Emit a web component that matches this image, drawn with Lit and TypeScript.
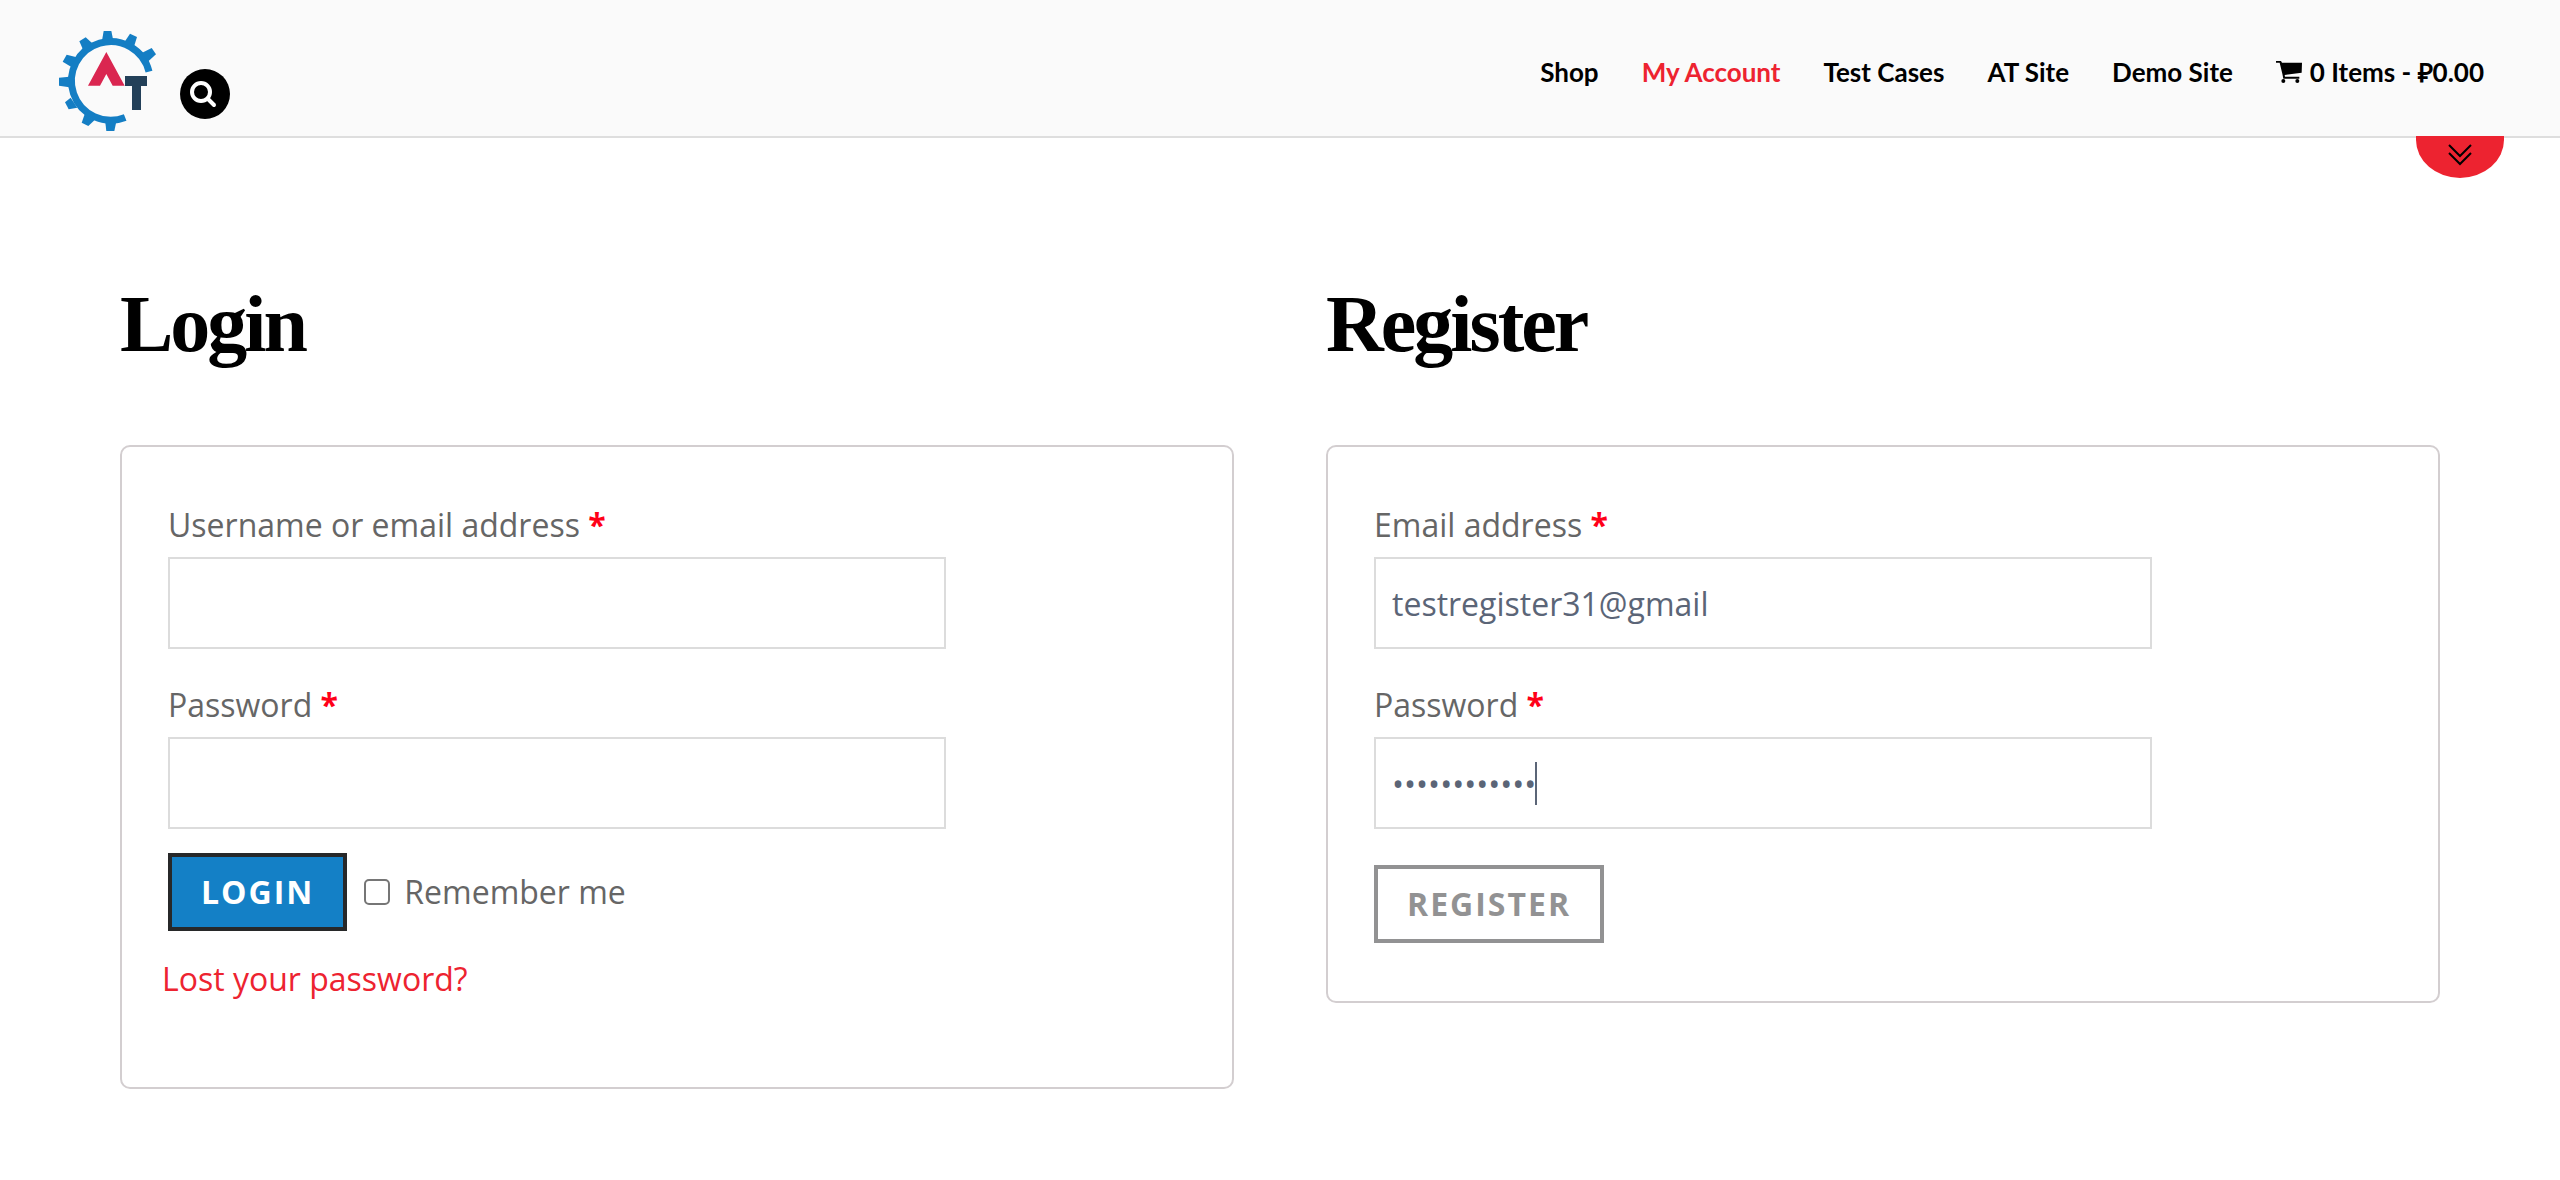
import { LitElement, html, svg, css } from "lit";
import { customElement, property } from "lit/decorators.js";

const cartIcon = svg`
  <path d="M0 0H15L18 5H78L77 35L26 42L27 47H70V53H22L19 38L11 5H0Z" />
  <circle cx="22" cy="60" r="6" /><circle cx="64" cy="60" r="6" />
`;

@customElement("site-header")
export class SiteHeader extends LitElement {
  static styles = css`
    :host {
      display: block;
      position: relative;
    }
    .bar {
      display: flex;
      align-items: flex-start;
      justify-content: space-between;
      padding: 31px 76px 5px 59px;
      background: #fafafa;
      border-bottom: 2px solid #dedede;
    }
    .brand {
      display: flex;
      align-items: flex-start;
      gap: 24px;
    }
    .logo,
    .logo svg {
      display: block;
      width: 97px;
      height: 100px;
    }
    .search {
      width: 50px;
      height: 50px;
      margin-top: 38px;
      padding: 0;
      border: 0;
      border-radius: 50%;
      background: #000;
    }
    .search svg {
      display: block;
    }
    .menu {
      display: flex;
      gap: 43px;
      margin: 23px 0 0;
      padding: 0;
      list-style: none;
      font: 700 26px/36px Lato, "Open Sans", sans-serif;
    }
    .link {
      display: flex;
      align-items: center;
      gap: 8px;
      color: #000;
      text-decoration: none;
      white-space: nowrap;
    }
    .active {
      color: #ed2330;
    }
    .tab {
      position: absolute;
      right: 56px;
      bottom: -40px;
      width: 88px;
      height: 42px;
      padding: 0;
      border: 0;
      border-radius: 0 0 44px 44px / 0 0 38px 38px;
      background: #ed2330;
    }
    .tab svg {
      display: block;
    }
  `;

  render() {
    return html`
      <header class="bar">
        <div class="brand">
          <a class="logo" href="#" aria-label="Automation practice site">
            <svg viewBox="57 63 291 300" aria-hidden="true">
              <path d="M327 185A118 118 0 1 0 255.500 322.500" fill="none" stroke="#147ec4" stroke-width="21" />
              <g fill="#147ec4">
                <path d="M191 63H214L220 92H186Z" />
                <path d="M270 71L291 81L281 113L251 100Z" />
                <path d="M335 114L348 133L325 154L305 129Z" />
                <path d="M118 94L137 82L160 103L131 123Z" />
                <path d="M80 134L68 155L93 170L110 142Z" />
                <path d="M57 203V227L88 232V200Z" />
                <path d="M75 277L86 298L112 293L92 263Z" />
                <path d="M125 338L145 348L164 330L134 313Z" />
                <path d="M199 363H223L230 330H195Z" />
              </g>
              <path d="M199 126L254 227H218L199 192L180 227H144Z" fill="#da2650" />
              <path d="M255 198H321V228H303V300H276V228H255Z" fill="#234059" />
            </svg>
          </a>
          <button class="search" type="button" aria-label="Search">
            <svg width="50" height="50" viewBox="0 0 50 50" fill="none" stroke="#fff" stroke-width="4" stroke-linecap="round">
              <circle cx="21" cy="23" r="9" />
              <path d="M28 30L34 36" />
            </svg>
          </button>
        </div>
        <nav>
          <ul class="menu">
            <li><a class="link" href="#">Shop</a></li>
            <li><a class="link active" href="#">My Account</a></li>
            <li><a class="link" href="#">Test Cases</a></li>
            <li><a class="link" href="#">AT Site</a></li>
            <li><a class="link" href="#">Demo Site</a></li>
            <li>
              <a class="link" href="#">
                <svg width="26" height="22" viewBox="0 0 78 66" aria-hidden="true">${cartIcon}</svg>
                0 Items - ₽0.00
              </a>
            </li>
          </ul>
        </nav>
      </header>
      <button class="tab" type="button" aria-label="Expand">
        <svg width="88" height="42" viewBox="0 0 88 42" fill="none" stroke="#000" stroke-width="2">
          <path d="M33 9L44 20L55 9M33 17L44 28L55 17" />
        </svg>
      </button>
    `;
  }
}

@customElement("form-field")
export class FormField extends LitElement {
  @property() label = "";
  @property() type = "text";
  @property() value = "";
  @property({ type: Boolean }) caret = false;

  static styles = css`
    :host {
      display: block;
    }
    .label {
      display: block;
      margin-bottom: 10px;
    }
    .star {
      color: #ff0018;
      font-weight: 700;
    }
    .box {
      position: relative;
      max-width: 778px;
    }
    .input {
      display: block;
      box-sizing: border-box;
      width: 100%;
      height: 92px;
      padding: 0 16px;
      border: 2px solid #dcdcdc;
      outline: 0;
      background: #fff;
      color: #5b6577;
      font: inherit;
    }
    .caret {
      position: absolute;
      left: 161px;
      top: 25px;
      width: 2px;
      height: 43px;
      background: #5b6577;
    }
  `;

  render() {
    return html`
      <label class="label" for="input">${this.label} <span class="star">*</span></label>
      <div class="box">
        <input class="input" id="input" type=${this.type} .value=${this.value} />
        ${this.caret ? html`<span class="caret"></span>` : null}
      </div>
    `;
  }
}

@customElement("app-root")
export class AppRoot extends LitElement {
  static styles = css`
    :host {
      display: block;
      color: #666;
      font: 400 32px/44px "Open Sans", "Noto Sans", sans-serif;
    }
    .page {
      display: grid;
      grid-template-columns: 1fr 1fr;
      align-items: start;
      gap: 92px;
      padding: 140px 120px 60px;
    }
    .title {
      margin: 0 0 75px;
      color: #000;
      font: 700 80px/92px "Liberation Serif", "Times New Roman", serif;
      letter-spacing: -3px;
    }
    .card {
      padding: 56px 46px 58px;
      border: 2px solid #d3ced0;
      border-radius: 10px;
    }
    .field {
      margin-bottom: 34px;
    }
    .actions {
      display: flex;
      align-items: center;
      gap: 17px;
      margin-top: 24px;
    }
    .register {
      margin-top: 36px;
    }
    .button {
      height: 78px;
      padding: 0 29px;
      border: 4px solid #272829;
      background: #1480c6;
      color: #fff;
      font: 700 32px/44px "Open Sans", "Noto Sans", sans-serif;
      letter-spacing: 2px;
      text-transform: uppercase;
    }
    .button:disabled {
      background: #fff;
      color: #272829;
      opacity: 0.5;
    }
    .remember {
      display: flex;
      align-items: center;
      gap: 14px;
    }
    .check {
      appearance: none;
      width: 26px;
      height: 26px;
      margin: 0;
      border: 2px solid #767676;
      border-radius: 5px;
      background: #fff;
    }
    .lost {
      margin: 26px 0 28px -6px;
    }
    .lost-link {
      color: #ed2330;
      text-decoration: none;
    }
  `;

  render() {
    return html`
      <site-header></site-header>
      <main class="page">
        <section>
          <h2 class="title">Login</h2>
          <form class="card">
            <form-field class="field" label="Username or email address"></form-field>
            <form-field label="Password" type="password"></form-field>
            <div class="actions">
              <button class="button" type="button">Login</button>
              <label class="remember"><input class="check" type="checkbox" />Remember me</label>
            </div>
            <p class="lost"><a class="lost-link" href="#">Lost your password?</a></p>
          </form>
        </section>
        <section>
          <h2 class="title">Register</h2>
          <form class="card">
            <form-field class="field" label="Email address" type="email" value="testregister31@gmail"></form-field>
            <form-field label="Password" type="password" value="abcdefghijkl" caret></form-field>
            <div class="actions register">
              <button class="button" type="button" disabled>Register</button>
            </div>
          </form>
        </section>
      </main>
    `;
  }
}
